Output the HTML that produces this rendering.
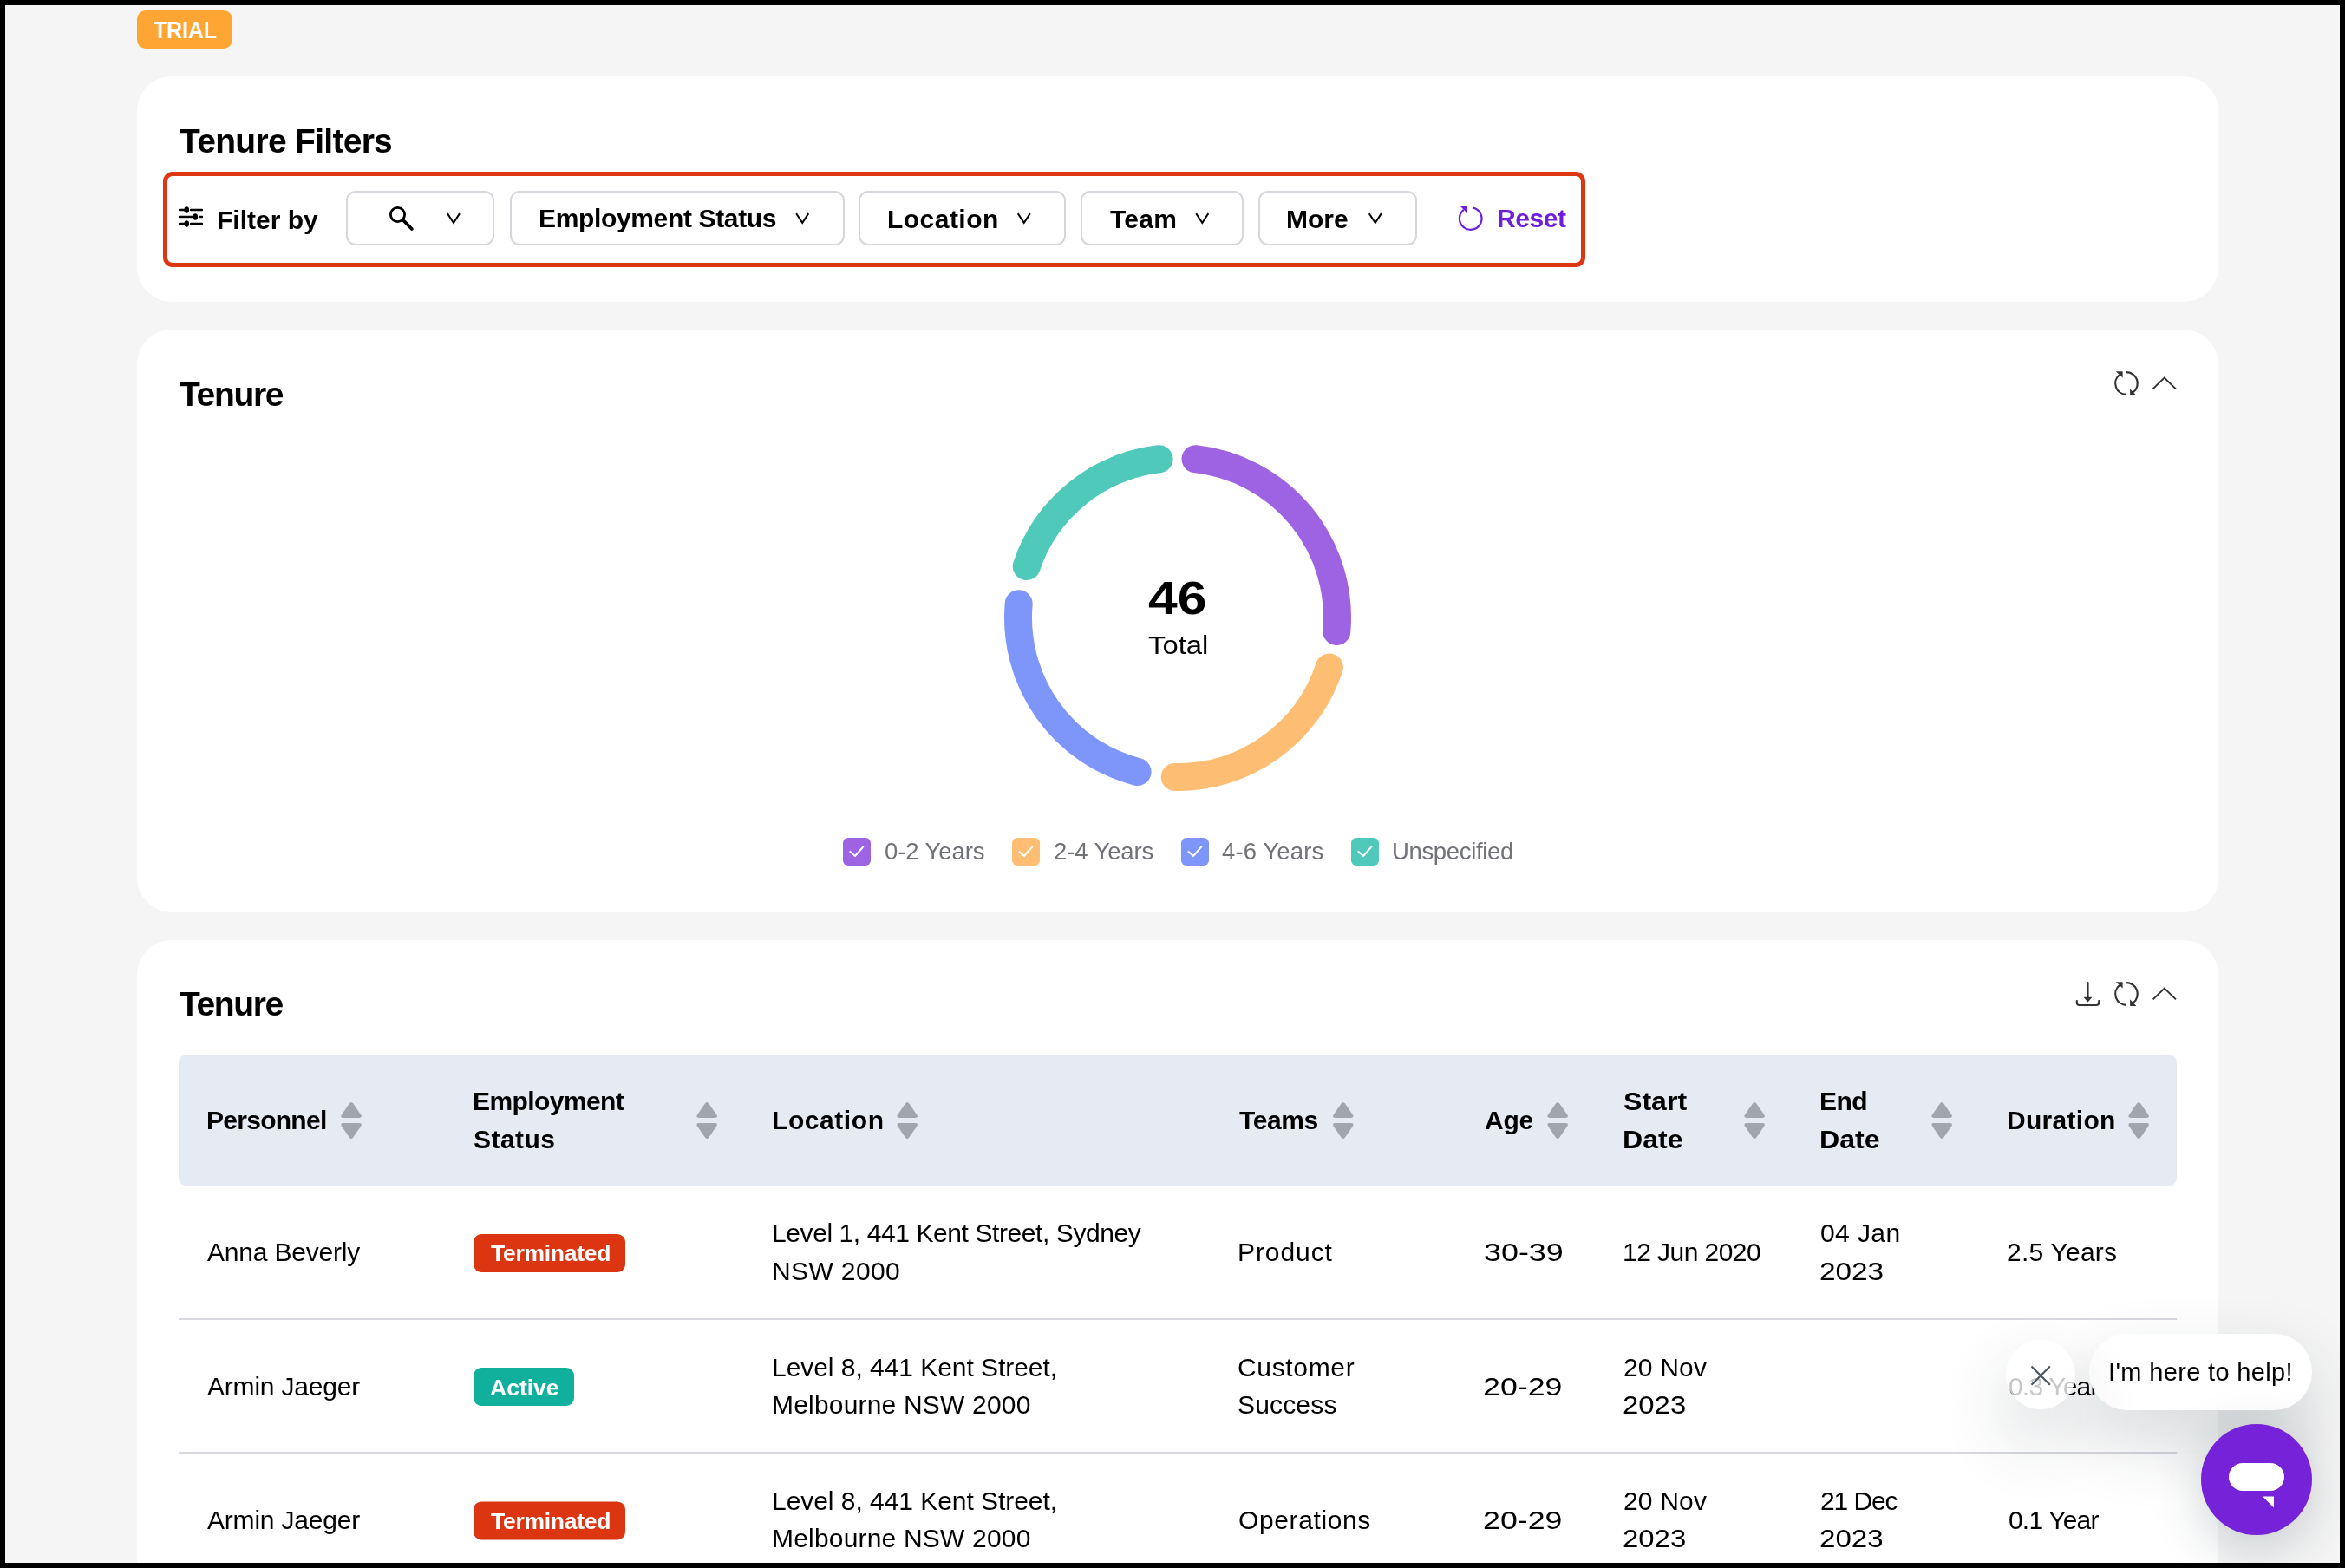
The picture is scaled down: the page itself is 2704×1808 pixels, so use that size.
<!DOCTYPE html>
<html><head><meta charset="utf-8"><title>Tenure</title>
<style>
html,body{margin:0;padding:0;}
body{width:2704px;height:1808px;background:#000;position:relative;overflow:hidden;font-family:"Liberation Sans",sans-serif;}
.frame{position:absolute;left:6px;top:6px;width:2692px;height:1796px;background:#f5f5f5;overflow:hidden;}
.abs{position:absolute;}
.card{position:absolute;left:152px;width:2400px;background:#fff;border-radius:40px;}
.t{position:absolute;white-space:nowrap;will-change:transform;font-family:"Liberation Sans",sans-serif;}
.fbox{position:absolute;top:215px;height:58px;border:2px solid #d5d5db;border-radius:11px;box-sizing:content-box;}
svg{position:absolute;overflow:visible;}
</style></head><body>
<div class="frame">

<div class="card" style="top:82px;height:260px"></div>
<div class="card" style="top:374px;height:672px"></div>
<div class="card" style="top:1078px;height:900px"></div>
<div class="abs" style="left:152px;top:6px;width:110px;height:44px;background:#ffa534;border-radius:10px"></div>
<div class="abs" style="left:182px;top:192px;width:1640px;height:110px;box-sizing:border-box;border:5px solid #dc3612;border-radius:11px"></div>
<div class="abs" style="left:393px;top:214px;width:171px;height:63px;box-sizing:border-box;border:2px solid #d6d6dc;border-radius:11px"></div>
<div class="abs" style="left:582px;top:214px;width:385.5px;height:63px;box-sizing:border-box;border:2px solid #d6d6dc;border-radius:11px"></div>
<div class="abs" style="left:984px;top:214px;width:238.5px;height:63px;box-sizing:border-box;border:2px solid #d6d6dc;border-radius:11px"></div>
<div class="abs" style="left:1239.5px;top:214px;width:188.0px;height:63px;box-sizing:border-box;border:2px solid #d6d6dc;border-radius:11px"></div>
<div class="abs" style="left:1444.5px;top:214px;width:183.0px;height:63px;box-sizing:border-box;border:2px solid #d6d6dc;border-radius:11px"></div>
<svg width="2704" height="1808" style="left:-6px;top:-6px" viewBox="0 0 2704 1808"><g stroke="#000" stroke-width="2.4" stroke-linecap="round" fill="none"><line x1="207" y1="242" x2="212" y2="242"/><line x1="220" y1="242" x2="233" y2="242"/><line x1="207" y1="250" x2="222" y2="250"/><line x1="230" y1="250" x2="233" y2="250"/><line x1="207" y1="258" x2="212" y2="258"/><line x1="220" y1="258" x2="233" y2="258"/></g><g fill="#000"><ellipse cx="215.2" cy="242" rx="2.9" ry="3.8"/><ellipse cx="225.2" cy="250" rx="2.9" ry="3.8"/><ellipse cx="215.2" cy="258" rx="2.9" ry="3.8"/></g><circle cx="458.5" cy="247.5" r="8.1" stroke="#000" stroke-width="2.8" fill="none"/><line x1="465.5" y1="254.5" x2="474.8" y2="264" stroke="#000" stroke-width="3.8" stroke-linecap="round"/><polyline points="516.5,247 523,257 529.5,247" stroke="#000" stroke-width="2" fill="none" stroke-linecap="square" stroke-linejoin="miter"/><polyline points="918.7,247 925.2,257 931.7,247" stroke="#000" stroke-width="2" fill="none" stroke-linecap="square" stroke-linejoin="miter"/><polyline points="1174.3,247 1180.8,257 1187.3,247" stroke="#000" stroke-width="2" fill="none" stroke-linecap="square" stroke-linejoin="miter"/><polyline points="1379.8,247 1386.3,257 1392.8,247" stroke="#000" stroke-width="2" fill="none" stroke-linecap="square" stroke-linejoin="miter"/><polyline points="1579.3,247 1585.8,257 1592.3,247" stroke="#000" stroke-width="2" fill="none" stroke-linecap="square" stroke-linejoin="miter"/><path d="M1697.92,239.39 A12.8,12.8 0 1 1 1687.82,241.91" stroke="#6f1fd9" stroke-width="2.2" fill="none"/><polygon points="1684,238 1692,238 1692,246" fill="#6f1fd9"/><path d="M2443.94,432.05 A12.8,12.8 0 0 0 2452.00,454.80" stroke="#333" stroke-width="2.2" fill="none"/><path d="M2451.11,429.23 A12.8,12.8 0 0 1 2459.88,452.09" stroke="#333" stroke-width="2.2" fill="none"/><polygon points="2439.8,428.2 2447.6,428.2 2447.6,435.4" fill="#333"/><polygon points="2456.1,448.2 2456.1,456 2463.4,456" fill="#333"/><polyline points="2482.5,448.4 2495.7,435.6 2508.8999999999996,448.4" stroke="#333" stroke-width="2" fill="none"/><path d="M2443.94,1136.05 A12.8,12.8 0 0 0 2452.00,1158.80" stroke="#333" stroke-width="2.2" fill="none"/><path d="M2451.11,1133.23 A12.8,12.8 0 0 1 2459.88,1156.09" stroke="#333" stroke-width="2.2" fill="none"/><polygon points="2439.8,1132.2 2447.6,1132.2 2447.6,1139.4" fill="#333"/><polygon points="2456.1,1152.2 2456.1,1160 2463.4,1160" fill="#333"/><polyline points="2482.6000000000004,1152.4 2495.8,1139.6 2509.0,1152.4" stroke="#333" stroke-width="2" fill="none"/><g stroke="#333" stroke-width="2.2" fill="none" stroke-linecap="round"><line x1="2407.5" y1="1133" x2="2407.5" y2="1150"/><path d="M2394.8,1154 V1156 Q2394.8,1159 2397.8,1159 H2417.2 Q2420.2,1159 2420.2,1156 V1154"/></g><polygon points="2402.5,1149.8 2412.5,1149.8 2407.5,1155.6" fill="#333"/><path d="M1378.51,529.15 A184,184 0 0 1 1541.30,728.04" stroke="#9e63e2" stroke-width="32" fill="none" stroke-linecap="round"/><path d="M1532.79,769.47 A184,184 0 0 1 1354.79,895.97" stroke="#fdbd72" stroke-width="32" fill="none" stroke-linecap="round"/><path d="M1311.62,890.06 A184,184 0 0 1 1174.67,696.28" stroke="#7e96f9" stroke-width="32" fill="none" stroke-linecap="round"/><path d="M1183.71,653.01 A184,184 0 0 1 1336.53,529.26" stroke="#4fc9b9" stroke-width="32" fill="none" stroke-linecap="round"/><rect x="972" y="966" width="32" height="32" rx="6" fill="#9e63e2"/><polyline points="979.8,981.5 986,987 995.8,975.8" stroke="#fff" stroke-width="2" fill="none"/><rect x="1167" y="966" width="32" height="32" rx="6" fill="#fdbd72"/><polyline points="1174.8,981.5 1181,987 1190.8,975.8" stroke="#fff" stroke-width="2" fill="none"/><rect x="1362" y="966" width="32" height="32" rx="6" fill="#7e96f9"/><polyline points="1369.8,981.5 1376,987 1385.8,975.8" stroke="#fff" stroke-width="2" fill="none"/><rect x="1558" y="966" width="32" height="32" rx="6" fill="#4fc9b9"/><polyline points="1565.8,981.5 1572,987 1581.8,975.8" stroke="#fff" stroke-width="2" fill="none"/><rect x="206" y="1216" width="2304" height="151.5" rx="9" fill="#e6eaf3"/><path d="M402.84999999999997,1272.6 Q405.04999999999995,1269.6 407.24999999999994,1272.6 L416.4,1285.8 Q417.8,1289 414.2,1289 L395.9,1289 Q392.29999999999995,1289 393.7,1285.8 Z" fill="#a2a5ae"/><path d="M402.84999999999997,1311.4 Q405.04999999999995,1314.4 407.24999999999994,1311.4 L416.4,1298.2 Q417.8,1295 414.2,1295 L395.9,1295 Q392.29999999999995,1295 393.7,1298.2 Z" fill="#a2a5ae"/><path d="M812.9499999999999,1272.6 Q815.15,1269.6 817.35,1272.6 L826.5,1285.8 Q827.9,1289 824.3,1289 L806,1289 Q802.4,1289 803.8,1285.8 Z" fill="#a2a5ae"/><path d="M812.9499999999999,1311.4 Q815.15,1314.4 817.35,1311.4 L826.5,1298.2 Q827.9,1295 824.3,1295 L806,1295 Q802.4,1295 803.8,1298.2 Z" fill="#a2a5ae"/><path d="M1043.95,1272.6 Q1046.15,1269.6 1048.3500000000001,1272.6 L1057.5,1285.8 Q1058.8999999999999,1289 1055.3,1289 L1037,1289 Q1033.4,1289 1034.8,1285.8 Z" fill="#a2a5ae"/><path d="M1043.95,1311.4 Q1046.15,1314.4 1048.3500000000001,1311.4 L1057.5,1298.2 Q1058.8999999999999,1295 1055.3,1295 L1037,1295 Q1033.4,1295 1034.8,1298.2 Z" fill="#a2a5ae"/><path d="M1546.55,1272.6 Q1548.75,1269.6 1550.95,1272.6 L1560.1,1285.8 Q1561.4999999999998,1289 1557.8999999999999,1289 L1539.6,1289 Q1536.0,1289 1537.3999999999999,1285.8 Z" fill="#a2a5ae"/><path d="M1546.55,1311.4 Q1548.75,1314.4 1550.95,1311.4 L1560.1,1298.2 Q1561.4999999999998,1295 1557.8999999999999,1295 L1539.6,1295 Q1536.0,1295 1537.3999999999999,1298.2 Z" fill="#a2a5ae"/><path d="M1793.95,1272.6 Q1796.15,1269.6 1798.3500000000001,1272.6 L1807.5,1285.8 Q1808.8999999999999,1289 1805.3,1289 L1787,1289 Q1783.4,1289 1784.8,1285.8 Z" fill="#a2a5ae"/><path d="M1793.95,1311.4 Q1796.15,1314.4 1798.3500000000001,1311.4 L1807.5,1298.2 Q1808.8999999999999,1295 1805.3,1295 L1787,1295 Q1783.4,1295 1784.8,1298.2 Z" fill="#a2a5ae"/><path d="M2020.95,1272.6 Q2023.15,1269.6 2025.3500000000001,1272.6 L2034.5,1285.8 Q2035.8999999999999,1289 2032.3,1289 L2014,1289 Q2010.4,1289 2011.8,1285.8 Z" fill="#a2a5ae"/><path d="M2020.95,1311.4 Q2023.15,1314.4 2025.3500000000001,1311.4 L2034.5,1298.2 Q2035.8999999999999,1295 2032.3,1295 L2014,1295 Q2010.4,1295 2011.8,1298.2 Z" fill="#a2a5ae"/><path d="M2236.9500000000003,1272.6 Q2239.15,1269.6 2241.35,1272.6 L2250.5,1285.8 Q2251.9,1289 2248.3,1289 L2230,1289 Q2226.4,1289 2227.8,1285.8 Z" fill="#a2a5ae"/><path d="M2236.9500000000003,1311.4 Q2239.15,1314.4 2241.35,1311.4 L2250.5,1298.2 Q2251.9,1295 2248.3,1295 L2230,1295 Q2226.4,1295 2227.8,1298.2 Z" fill="#a2a5ae"/><path d="M2463.9500000000003,1272.6 Q2466.15,1269.6 2468.35,1272.6 L2477.5,1285.8 Q2478.9,1289 2475.3,1289 L2457,1289 Q2453.4,1289 2454.8,1285.8 Z" fill="#a2a5ae"/><path d="M2463.9500000000003,1311.4 Q2466.15,1314.4 2468.35,1311.4 L2477.5,1298.2 Q2478.9,1295 2475.3,1295 L2457,1295 Q2453.4,1295 2454.8,1298.2 Z" fill="#a2a5ae"/><rect x="206" y="1520" width="2304" height="2" fill="#d8d8de"/><rect x="206" y="1674" width="2304" height="2" fill="#d8d8de"/><rect x="546" y="1423" width="175" height="44" rx="9" fill="#dc3511"/><rect x="546" y="1577" width="116" height="44" rx="9" fill="#10b09d"/><rect x="546" y="1731.4" width="175" height="44" rx="9" fill="#dc3511"/></svg>
<div class="t" style="left:171.00px;top:15px;font-size:27.5px;line-height:27.5px;font-weight:700;color:#ffffff;transform:scaleX(0.9000);transform-origin:0 0">TRIAL</div>
<div class="t" style="left:201.00px;top:137px;font-size:39px;line-height:39px;font-weight:700;color:#000000;letter-spacing:-0.708px">Tenure Filters</div>
<div class="t" style="left:243.80px;top:233px;font-size:30px;line-height:30px;font-weight:700;color:#000000;letter-spacing:0.000px">Filter by</div>
<div class="t" style="left:614.60px;top:231px;font-size:30px;line-height:30px;font-weight:700;color:#000000;letter-spacing:-0.350px">Employment Status</div>
<div class="t" style="left:1016.70px;top:232px;font-size:30px;line-height:30px;font-weight:700;color:#000000;letter-spacing:0.471px">Location</div>
<div class="t" style="left:1274.00px;top:232px;font-size:30px;line-height:30px;font-weight:700;color:#000000;letter-spacing:0.267px">Team</div>
<div class="t" style="left:1477.00px;top:232px;font-size:30px;line-height:30px;font-weight:700;color:#000000;letter-spacing:0.000px">More</div>
<div class="t" style="left:1719.50px;top:231px;font-size:30px;line-height:30px;font-weight:700;color:#6f1fd9;letter-spacing:-0.450px">Reset</div>
<div class="t" style="left:201.00px;top:429px;font-size:39px;line-height:39px;font-weight:700;color:#000000;letter-spacing:-1.320px">Tenure</div>
<div class="t" style="left:1317.86px;top:657px;font-size:53px;line-height:53px;font-weight:700;color:#000000;transform:scaleX(1.1429);transform-origin:0 0">46</div>
<div class="t" style="left:1317.91px;top:723px;font-size:30px;line-height:30px;font-weight:400;color:#000000;transform:scaleX(1.0933);transform-origin:0 0">Total</div>
<div class="t" style="left:1013.70px;top:962px;font-size:27.5px;line-height:27.5px;font-weight:400;color:#707278;letter-spacing:-0.088px">0-2 Years</div>
<div class="t" style="left:1208.90px;top:962px;font-size:27.5px;line-height:27.5px;font-weight:400;color:#707278;letter-spacing:-0.113px">2-4 Years</div>
<div class="t" style="left:1403.00px;top:962px;font-size:27.5px;line-height:27.5px;font-weight:400;color:#707278;letter-spacing:0.125px">4-6 Years</div>
<div class="t" style="left:1598.50px;top:962px;font-size:27.5px;line-height:27.5px;font-weight:400;color:#707278;letter-spacing:-0.350px">Unspecified</div>
<div class="t" style="left:201.00px;top:1132px;font-size:39px;line-height:39px;font-weight:700;color:#000000;letter-spacing:-1.400px">Tenure</div>
<div class="t" style="left:231.80px;top:1271px;font-size:30px;line-height:30px;font-weight:700;color:#000000;letter-spacing:-0.725px">Personnel</div>
<div class="t" style="left:538.80px;top:1249px;font-size:30px;line-height:30px;font-weight:700;color:#000000;letter-spacing:-0.578px">Employment</div>
<div class="t" style="left:539.80px;top:1293px;font-size:30px;line-height:30px;font-weight:700;color:#000000;letter-spacing:0.440px">Status</div>
<div class="t" style="left:883.80px;top:1271px;font-size:30px;line-height:30px;font-weight:700;color:#000000;letter-spacing:0.571px">Location</div>
<div class="t" style="left:1423.00px;top:1271px;font-size:30px;line-height:30px;font-weight:700;color:#000000;letter-spacing:-0.400px">Teams</div>
<div class="t" style="left:1705.50px;top:1271px;font-size:30px;line-height:30px;font-weight:700;color:#000000;letter-spacing:-0.250px">Age</div>
<div class="t" style="left:1865.93px;top:1249px;font-size:30px;line-height:30px;font-weight:700;color:#000000;transform:scaleX(1.0701);transform-origin:0 0">Start</div>
<div class="t" style="left:1864.86px;top:1293px;font-size:30px;line-height:30px;font-weight:700;color:#000000;transform:scaleX(1.0694);transform-origin:0 0">Date</div>
<div class="t" style="left:2092.00px;top:1249px;font-size:30px;line-height:30px;font-weight:700;color:#000000;letter-spacing:-0.500px">End</div>
<div class="t" style="left:2091.86px;top:1293px;font-size:30px;line-height:30px;font-weight:700;color:#000000;transform:scaleX(1.0710);transform-origin:0 0">Date</div>
<div class="t" style="left:2308.00px;top:1271px;font-size:30px;line-height:30px;font-weight:700;color:#000000;letter-spacing:0.286px">Duration</div>
<div class="t" style="left:233.20px;top:1423px;font-size:30px;line-height:30px;font-weight:400;color:#000000;letter-spacing:-0.200px">Anna Beverly</div>
<div class="t" style="left:559.50px;top:1426px;font-size:26.5px;line-height:26.5px;font-weight:700;color:#ffffff;letter-spacing:-0.278px">Terminated</div>
<div class="t" style="left:883.80px;top:1401px;font-size:30px;line-height:30px;font-weight:400;color:#000000;letter-spacing:-0.413px">Level 1, 441 Kent Street, Sydney</div>
<div class="t" style="left:883.80px;top:1445px;font-size:30px;line-height:30px;font-weight:400;color:#000000;letter-spacing:0.386px">NSW 2000</div>
<div class="t" style="left:1421.00px;top:1423px;font-size:30px;line-height:30px;font-weight:400;color:#000000;letter-spacing:0.917px">Product</div>
<div class="t" style="left:1705.30px;top:1423px;font-size:30px;line-height:30px;font-weight:400;color:#000000;transform:scaleX(1.1959);transform-origin:0 0">30-39</div>
<div class="t" style="left:1865.00px;top:1423px;font-size:30px;line-height:30px;font-weight:400;color:#000000;letter-spacing:-0.550px">12 Jun 2020</div>
<div class="t" style="left:2093.00px;top:1401px;font-size:30px;line-height:30px;font-weight:400;color:#000000;letter-spacing:0.400px">04 Jan</div>
<div class="t" style="left:2091.78px;top:1445px;font-size:30px;line-height:30px;font-weight:400;color:#000000;transform:scaleX(1.1111);transform-origin:0 0">2023</div>
<div class="t" style="left:2308.00px;top:1423px;font-size:30px;line-height:30px;font-weight:400;color:#000000;letter-spacing:0.250px">2.5 Years</div>
<div class="t" style="left:233.40px;top:1578px;font-size:30px;line-height:30px;font-weight:400;color:#000000;letter-spacing:-0.200px">Armin Jaeger</div>
<div class="t" style="left:558.50px;top:1581px;font-size:26.5px;line-height:26.5px;font-weight:700;color:#ffffff;letter-spacing:0.000px">Active</div>
<div class="t" style="left:883.80px;top:1556px;font-size:30px;line-height:30px;font-weight:400;color:#000000;letter-spacing:-0.046px">Level 8, 441 Kent Street,</div>
<div class="t" style="left:883.80px;top:1599px;font-size:30px;line-height:30px;font-weight:400;color:#000000;letter-spacing:0.188px">Melbourne NSW 2000</div>
<div class="t" style="left:1421.00px;top:1556px;font-size:30px;line-height:30px;font-weight:400;color:#000000;letter-spacing:0.657px">Customer</div>
<div class="t" style="left:1421.00px;top:1599px;font-size:30px;line-height:30px;font-weight:400;color:#000000;letter-spacing:0.167px">Success</div>
<div class="t" style="left:1704.42px;top:1578px;font-size:30px;line-height:30px;font-weight:400;color:#000000;transform:scaleX(1.1918);transform-origin:0 0">20-29</div>
<div class="t" style="left:1865.50px;top:1556px;font-size:30px;line-height:30px;font-weight:400;color:#000000;letter-spacing:0.180px">20 Nov</div>
<div class="t" style="left:1865.31px;top:1599px;font-size:30px;line-height:30px;font-weight:400;color:#000000;transform:scaleX(1.0968);transform-origin:0 0">2023</div>
<div class="t" style="left:2309.70px;top:1578px;font-size:30px;line-height:30px;font-weight:400;color:#000000;letter-spacing:-0.814px">0.3 Year</div>
<div class="t" style="left:233.40px;top:1732px;font-size:30px;line-height:30px;font-weight:400;color:#000000;letter-spacing:-0.200px">Armin Jaeger</div>
<div class="t" style="left:559.50px;top:1735px;font-size:26.5px;line-height:26.5px;font-weight:700;color:#ffffff;letter-spacing:-0.278px">Terminated</div>
<div class="t" style="left:883.80px;top:1710px;font-size:30px;line-height:30px;font-weight:400;color:#000000;letter-spacing:-0.046px">Level 8, 441 Kent Street,</div>
<div class="t" style="left:883.80px;top:1753px;font-size:30px;line-height:30px;font-weight:400;color:#000000;letter-spacing:0.188px">Melbourne NSW 2000</div>
<div class="t" style="left:1422.00px;top:1732px;font-size:30px;line-height:30px;font-weight:400;color:#000000;letter-spacing:0.622px">Operations</div>
<div class="t" style="left:1704.42px;top:1732px;font-size:30px;line-height:30px;font-weight:400;color:#000000;transform:scaleX(1.1918);transform-origin:0 0">20-29</div>
<div class="t" style="left:1865.50px;top:1710px;font-size:30px;line-height:30px;font-weight:400;color:#000000;letter-spacing:0.180px">20 Nov</div>
<div class="t" style="left:1865.31px;top:1753px;font-size:30px;line-height:30px;font-weight:400;color:#000000;transform:scaleX(1.0968);transform-origin:0 0">2023</div>
<div class="t" style="left:2092.50px;top:1710px;font-size:30px;line-height:30px;font-weight:400;color:#000000;letter-spacing:-1.100px">21 Dec</div>
<div class="t" style="left:2092.29px;top:1753px;font-size:30px;line-height:30px;font-weight:400;color:#000000;transform:scaleX(1.1032);transform-origin:0 0">2023</div>
<div class="t" style="left:2309.70px;top:1732px;font-size:30px;line-height:30px;font-weight:400;color:#000000;letter-spacing:-0.814px">0.1 Year</div>
<div class="abs" style="left:2403px;top:1532px;width:257px;height:88px;border-radius:44px;background:#fff;box-shadow:0 36px 80px rgba(25,45,55,0.19)"></div>
<div class="abs" style="left:2532px;top:1636px;width:128px;height:128px;border-radius:50%;background:#7522d8;box-shadow:0 14px 60px rgba(25,45,55,0.22)"></div>
<div class="abs" style="left:2307px;top:1539px;width:80px;height:80px;border-radius:50%;background:rgba(255,255,255,0.78);box-shadow:0 36px 80px rgba(25,45,55,0.19)"></div>
<svg width="2704" height="1808" style="left:-6px;top:-6px" viewBox="0 0 2704 1808"><g stroke="#4a5560" stroke-width="2.2" stroke-linecap="butt"><line x1="2342.5" y1="1575.5" x2="2363.8" y2="1596.8"/><line x1="2363.8" y1="1575.5" x2="2342.5" y2="1596.8"/></g><rect x="2570" y="1687" width="64" height="32" rx="16" fill="#fff"/><polygon points="2609,1725.4 2622,1725.4 2622,1738.6" fill="#fff"/></svg>

<div class="t" style="left:2425.00px;top:1562px;font-size:29px;line-height:29px;font-weight:400;color:#000;letter-spacing:0.344px">I&#39;m here to help!</div>
</div></body></html>
